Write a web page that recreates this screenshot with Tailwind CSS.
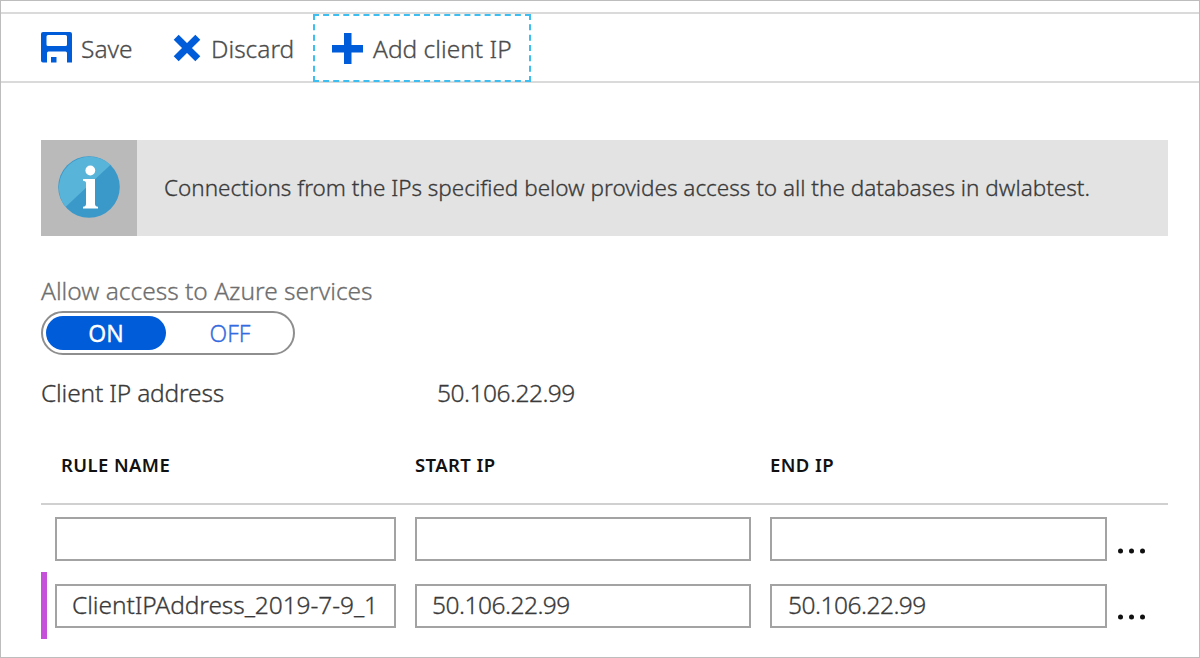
<!DOCTYPE html>
<html lang="en">
<head>
<meta charset="utf-8">
<title>Firewall settings</title>
<script src="https://cdn.jsdelivr.net/npm/@tailwindcss/browser@4"></script>
</head>
<body class="w-[1200px] h-[658px] overflow-hidden bg-white font-['Noto_Sans','Open_Sans',sans-serif] text-[24.500px] font-light [-webkit-text-stroke:0.3px] leading-8 text-[#3a3a3a]">
<div class="flex h-[658px] w-[1200px] flex-col border border-[#bdbdbd] pt-[11px]">
  <header class="flex h-[71px] shrink-0 border-y-2 border-[#dadada] pl-10 text-[#4c4c4c]">
    <button class="flex h-[67px] w-[131px] items-center">
      <svg class="mr-[9px] h-[31px] w-[31px] shrink-0" viewBox="0 0 31 31"><path fill="#015cda" fill-rule="evenodd" d="M2 0H29Q31 0 31 2V30.500H26V21Q26 19.500 24.500 19.500H7.500Q6 19.500 6 21V30.500H2Q0 30.500 0 28.500V2Q0 0 2 0ZM7 3Q5.500 3 5.500 4.500V12.500Q5.500 14 7 14H24.500Q26 14 26 12.500V4.500Q26 3 24.500 3ZM10 25H15.500V30.500H10Z"/></svg>
      <span class="mt-[2px] whitespace-nowrap">Save</span>
    </button>
    <button class="flex h-[67px] w-[141px] items-center">
      <svg class="ml-px mr-[10px] h-[28px] w-[28px] shrink-0" viewBox="0 0 28 28"><path stroke="#015cda" stroke-width="7" d="M3.200 3.200L24.800 24.800M24.800 3.200L3.200 24.800"/></svg>
      <span class="mt-[2px] whitespace-nowrap">Discard</span>
    </button>
    <button class="flex h-[68px] w-[218px] items-center border-2 border-dashed border-[#3dbdf0] pl-[17px]">
      <svg class="mr-[10px] h-[31px] w-[31px] shrink-0" viewBox="0 0 31 31"><path fill="#015cda" d="M12 0H19.500V12H31V19.500H19.500V31H12V19.500H0V12H12Z"/></svg>
      <span class="mt-[2px] whitespace-nowrap">Add client IP</span>
    </button>
  </header>
  <main class="flex flex-col pl-10 pr-[31px] pt-[57px]">
    <section class="flex h-24 items-center bg-[#e3e3e3]">
      <div class="flex h-24 w-24 items-center justify-center bg-[#bababa]">
        <svg class="mb-[2px] h-[62px] w-[62px]" viewBox="0 0 62 62"><circle cx="31" cy="31" r="30.800" fill="#3a99c9"/><path fill="#59b4d9" d="M52.500 8.700A31 31 0 0 0 7.500 51Z"/><circle cx="32.300" cy="14.500" r="4.900" fill="#fff"/><path fill="#fff" d="M25 23H37V48Q37 50.500 40 50.800V52.500H25V50.800Q28 50.500 28 48V27Q28 25 25 24.800Z"/></svg>
      </div>
      <p class="ml-[27px] whitespace-nowrap text-[22.500px]">Connections from the IPs specified below provides access to all the databases in dwlabtest.</p>
    </section>
    <div class="mt-[39px] flex h-8 text-[#6e6e6e]">Allow access to Azure services</div>
    <div class="mt-[4px] flex h-[44px] w-[254px] items-center rounded-full border-2 border-[#8e8e8e] p-[3px] text-center text-[23px]">
      <div class="h-[34px] w-[120px] shrink-0 rounded-full bg-[#015cda] leading-[35px] font-normal text-white">ON</div>
      <div class="w-[128px] shrink-0 leading-[35px] text-[#356be0]">OFF</div>
    </div>
    <div class="mt-[22px] flex h-8"><div class="w-[396px] tracking-[-0.18px]">Client IP address</div><div class="tracking-[-0.5px]">50.106.22.99</div></div>
    <div class="mt-[40px] flex h-[56px] border-b-2 border-[#d0d0d0] pl-[19px] text-[18.500px] font-semibold tracking-[0.4px] text-[#111] [-webkit-text-stroke:0px]">
      <div class="w-[355px] pl-px">RULE NAME</div><div class="w-[355px]">START IP</div><div>END IP</div>
    </div>
    <div class="flex h-[67px] items-center pl-[14px]">
      <div class="mr-[19px] h-[44px] w-[341px] border-2 border-[#a3a3a3]"></div>
      <div class="mr-[19px] h-[44px] w-[336px] border-2 border-[#a3a3a3]"></div>
      <div class="h-[44px] w-[337px] border-2 border-[#a3a3a3]"></div>
      <svg class="ml-[11px] mt-[24px] h-[6px] w-[28px]" viewBox="0 0 28 6"><g fill="#111"><circle cx="2.500" cy="3" r="2.500"/><circle cx="13.500" cy="3" r="2.500"/><circle cx="24.500" cy="3" r="2.500"/></g></svg>
    </div>
    <div class="flex h-[67px] items-center border-l-[6px] border-[#c650d9] pl-2">
      <div class="mr-[19px] h-[44px] w-[341px] border-2 border-[#a3a3a3] pl-[15px] pr-4 leading-[38px] tracking-[-0.08px]"><div class="overflow-hidden whitespace-nowrap">ClientIPAddress_2019-7-9_1</div></div>
      <div class="mr-[19px] h-[44px] w-[336px] border-2 border-[#a3a3a3] px-[15px] leading-[38px] tracking-[-0.5px]">50.106.22.99</div>
      <div class="h-[44px] w-[337px] border-2 border-[#a3a3a3] px-4 leading-[38px] tracking-[-0.5px]">50.106.22.99</div>
      <svg class="ml-[11px] mt-[22px] h-[6px] w-[28px]" viewBox="0 0 28 6"><g fill="#111"><circle cx="2.500" cy="3" r="2.500"/><circle cx="13.500" cy="3" r="2.500"/><circle cx="24.500" cy="3" r="2.500"/></g></svg>
    </div>
  </main>
</div>
</body>
</html>
